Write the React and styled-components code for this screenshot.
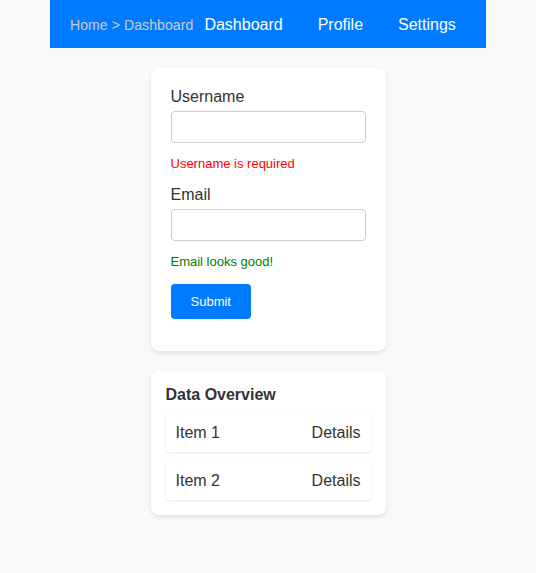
import styled, { createGlobalStyle } from "styled-components";

const GlobalStyle = createGlobalStyle`
  * {
    box-sizing: border-box;
  }
  body {
    margin: 0;
    background: #f8f9fa;
    font-family: "Liberation Sans", Arial, sans-serif;
    color: #333;
  }
`;

const Page = styled.div`
  display: flex;
  flex-direction: column;
  align-items: center;
  min-height: 573px;
`;

const Nav = styled.nav`
  width: 436px;
  height: 48px;
  background: #007bff;
  display: flex;
  align-items: center;
  padding: 1px 20px 0;
`;

const Breadcrumb = styled.span`
  font-size: 14px;
  color: #cccccc;
  margin-right: 11px;
  letter-spacing: 0.1px;
`;

const NavLinks = styled.div`
  display: flex;
  gap: 35px;
`;

const NavLink = styled.a`
  font-size: 16px;
  color: #ffffff;
  text-decoration: none;
`;

const Card = styled.div`
  width: 235px;
  background: #ffffff;
  border-radius: 8px;
  box-shadow: 0 2px 4px rgba(0, 0, 0, 0.1);
  padding: ${(p) => p.$pad};
  margin-top: 20px;
`;

const Field = styled.div`
  display: flex;
  flex-direction: column;
  margin-bottom: 15px;
`;

const Label = styled.label`
  font-size: 16px;
  line-height: 18px;
  margin-bottom: 5px;
`;

const Input = styled.input`
  height: 32px;
  width: 100%;
  border: 1px solid #cccccc;
  border-radius: 4px;
  padding: 0 8px;
  font-family: inherit;
`;

const Message = styled.span`
  font-size: 13px;
  line-height: 15px;
  margin-top: 13px;
  color: ${(p) => (p.$ok ? "green" : "red")};
`;

const Button = styled.button`
  background: #007bff;
  color: #ffffff;
  border: none;
  border-radius: 4px;
  padding: 10px 20px;
  font-family: inherit;
  font-size: 13px;
  line-height: 15px;
`;

const Title = styled.h3`
  margin: 0 0 10px;
  font-size: 16px;
  line-height: 18px;
  font-weight: bold;
`;

const Row = styled.div`
  display: flex;
  justify-content: space-between;
  padding: 10px;
  font-size: 16px;
  line-height: 18px;
  background: #ffffff;
  border-radius: 4px;
  box-shadow: 0 1px 3px rgba(0, 0, 0, 0.1);
  & + & {
    margin-top: 10px;
  }
`;

export default function App() {
  return (
    <Page>
      <GlobalStyle />
      <Nav>
        <Breadcrumb>Home &gt; Dashboard</Breadcrumb>
        <NavLinks>
          <NavLink href="#">Dashboard</NavLink>
          <NavLink href="#">Profile</NavLink>
          <NavLink href="#">Settings</NavLink>
        </NavLinks>
      </Nav>

      <Card $pad="20px 20px 32px">
        <Field>
          <Label>Username</Label>
          <Input type="text" />
          <Message>Username is required</Message>
        </Field>
        <Field>
          <Label>Email</Label>
          <Input type="email" />
          <Message $ok>Email looks good!</Message>
        </Field>
        <Button>Submit</Button>
      </Card>

      <Card $pad="15px">
        <Title>Data Overview</Title>
        <Row>
          <span>Item 1</span>
          <span>Details</span>
        </Row>
        <Row>
          <span>Item 2</span>
          <span>Details</span>
        </Row>
      </Card>
    </Page>
  );
}
